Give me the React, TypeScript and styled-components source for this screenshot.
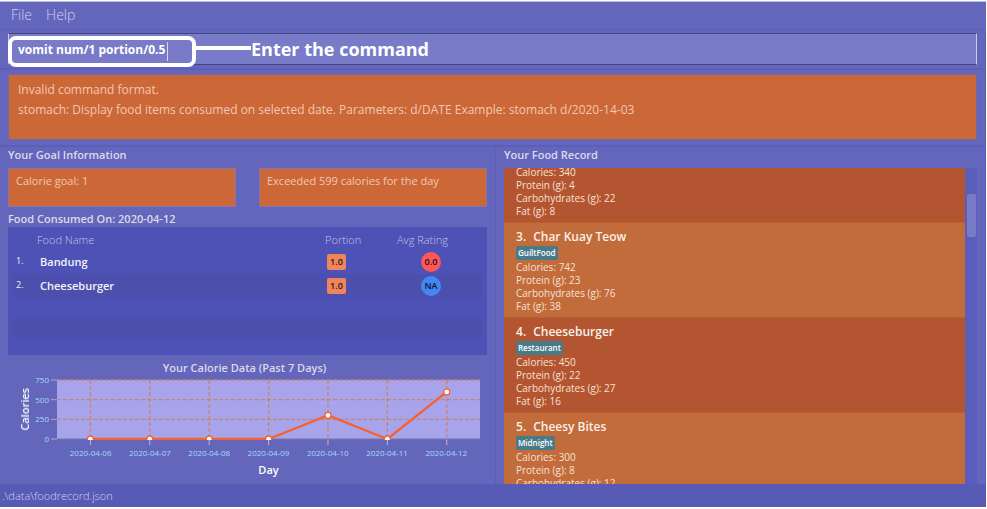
import React, { useLayoutEffect, useRef, useState } from "react";
import styled, { createGlobalStyle } from "styled-components";

const GlobalStyle = createGlobalStyle`
  * { box-sizing: border-box; }
  body {
    margin: 0;
    background: #ffffff;
    font-family: "Open Sans", "Noto Sans", sans-serif;
  }
`;

const Window = styled.div`
  display: flex;
  flex-direction: column;
  height: 100vh;
  border: solid #ffffff;
  border-width: 1px 1px 2px 0;
  background: #6466bc;
  color: #e0def0;
`;

const MenuBar = styled.nav`
  display: flex;
  gap: 14px;
  padding: 3px 11px 4px;
  border-top: 1px solid #b9bae0;
`;

const MenuButton = styled.button`
  padding: 0;
  border: 0;
  background: none;
  color: #d0d0ec;
  font: 300 14px/20px "Open Sans", sans-serif;
`;

const CommandPane = styled.div`
  position: relative;
  padding: 3px 8px;
  border: solid #5c5fba;
  border-width: 1px 1px 1px 0;
`;

const CommandInput = styled.input`
  display: block;
  width: 100%;
  height: 32px;
  padding: 0 9px;
  border: solid #42447f;
  border-width: 1px;
  border-left-color: #c9c9ec;
  border-right-color: #c9c9ec;
  border-radius: 0;
  outline: 0;
  background: #797bc8;
  color: #ffffff;
  font: 700 12px/20px "Open Sans", sans-serif;
`;

const Callout = styled.div`
  position: absolute;
  left: 8px;
  top: 6px;
  display: flex;
  align-items: center;
  pointer-events: none;
`;

const CalloutFrame = styled.div`
  display: flex;
  align-items: center;
  justify-content: flex-end;
  width: 188px;
  height: 31px;
  padding-right: 24px;
  border: 4px solid #ffffff;
  border-radius: 8px;
`;

const Caret = styled.div`
  width: 1px;
  height: 19px;
  background: #d8d8f2;
`;

const CalloutLine = styled.div`
  width: 55px;
  height: 4px;
  margin-bottom: 7px;
  background: #ffffff;
`;

const CalloutText = styled.span`
  margin-bottom: 6px;
  color: #ffffff;
  font: 700 18px/24px "Open Sans", sans-serif;
`;

const ResultPane = styled.div`
  padding: 4px 8px 5px;
  border: solid #5c5fba;
  border-width: 1px 1px 1px 0;
`;

const Result = styled.output`
  display: block;
  height: 66px;
  padding: 5px 9px;
  border: 1px solid #6f68ac;
  background: #cc6838;
  color: #f1c7b2;
  font-size: 12px;
  line-height: 20px;
`;

const Main = styled.main`
  display: grid;
  grid-template-columns: 496fr 490fr;
  flex: 1;
  min-height: 0;
`;

const Pane = styled.section`
  display: flex;
  flex-direction: column;
  min-height: 0;
  padding: 0 8px;
  border: solid #5a5db9;
  border-width: 1px 1px 0 0;
`;

const Heading = styled.h2<{ $tall?: boolean }>`
  margin: 0;
  padding-bottom: ${(p) => (p.$tall ? 5 : 0)}px;
  color: #dcdaea;
  font-weight: 600;
  font-size: 11px;
  line-height: 16px;
`;

const GoalRow = styled.div`
  display: grid;
  grid-template-columns: 1fr 1fr;
  gap: 23px;
  padding-bottom: 4px;
`;

const GoalBox = styled.div`
  height: 39px;
  padding: 2px 7px;
  border: 1px solid #8a72a8;
  background: #cc6838;
  color: #f1c7b2;
  font-size: 11px;
  line-height: 20px;
`;

const FoodPanel = styled.div`
  flex: 1;
  min-height: 0;
  padding: 1px 5px 0 4px;
  background: #4e51b5;
  overflow: hidden;
`;

const FoodTable = styled.table`
  width: 100%;
  border-collapse: collapse;
  table-layout: fixed;
`;

const Th = styled.th<{ $width?: number }>`
  width: ${(p) => (p.$width ? p.$width + "px" : "auto")};
  height: 22px;
  padding: 2px 0 0;
  text-align: left;
  color: #c4c3e4;
  font-weight: 300;
  font-size: 11px;
  line-height: 16px;
`;

const FoodRow = styled.tr`
  height: 24px;
  &:nth-child(even) { background: #4c50ac; }
`;

const Td = styled.td<{ $inset?: number }>`
  padding: 0 0 1px ${(p) => p.$inset ?? 0}px;
  color: #f4f3fb;
  font-weight: 600;
  font-size: 11px;
  line-height: 16px;
`;

const IndexCell = styled(Td)`
  padding-bottom: 3px;
  font-weight: 400;
  font-size: 9px;
`;

const Portion = styled.span`
  display: block;
  width: 19px;
  border-radius: 2px;
  background: #f0845b;
  color: #1d1a1a;
  text-align: center;
  font-size: 9px;
  line-height: 16px;
`;

const Rating = styled.span<{ $color: string }>`
  display: block;
  width: 20px;
  border-radius: 50%;
  background: ${(p) => p.$color};
  color: #14121c;
  text-align: center;
  font-size: 9px;
  line-height: 20px;
`;

const EmptyStripe = styled.div`
  height: 20px;
  margin-top: 20px;
  background: #4c50ac;
`;

const Chart = styled.figure`
  display: grid;
  grid-template-columns: 36px 12px 1fr;
  margin: 0;
  padding: 3px 7px 4px 1px;
`;

const ChartTitle = styled.figcaption`
  grid-column: 1 / -1;
  padding-bottom: 2px;
  text-align: center;
  color: #dcdaea;
  font-weight: 600;
  font-size: 11px;
  line-height: 20px;
`;

const YAxis = styled.div`
  display: flex;
  align-items: center;
  justify-content: space-between;
  height: 59px;
  padding-left: 8px;
`;

const YLabel = styled.span`
  writing-mode: vertical-rl;
  transform: rotate(180deg);
  color: #ffffff;
  font-weight: 600;
  font-size: 11px;
  line-height: 16px;
`;

const Ticks = styled.div`
  display: flex;
  flex-direction: column;
  justify-content: space-between;
  height: 71px;
  margin-right: -4px;
  text-align: right;
  color: #a2dcf4;
  font-size: 8px;
  line-height: 12px;
`;

const Plot = styled.svg`
  grid-column: 3;
  display: block;
  width: 100%;
  height: 59px;
  overflow: visible;
`;

const Days = styled.div`
  grid-column: 3;
  display: flex;
  padding: 8px 4px 1px;
  color: #a2dcf4;
  font-size: 8px;
  line-height: 12px;
  text-align: center;
`;

const Day = styled.span`
  flex: 1;
`;

const XLabel = styled.div`
  grid-column: 3;
  text-align: center;
  color: #ffffff;
  font-weight: 600;
  font-size: 11px;
  line-height: 20px;
`;

const RecordArea = styled.div`
  display: flex;
  flex: 1;
  min-height: 0;
`;

const RecordList = styled.ol`
  flex: 1;
  margin: 0;
  padding: 0;
  list-style: none;
  overflow-y: auto;
  scrollbar-width: none;
`;

const RecordItem = styled.li`
  padding: 5px 12px 4px;
  border-top: 1px solid #b9602f;
  background: #c26b3b;
  color: #f8e0d4;
  &:nth-child(odd) { background: #b35530; }
`;

const RecordName = styled.h3`
  display: flex;
  gap: 7px;
  margin: 0;
  color: #fbf0ea;
  font-weight: 600;
  font-size: 12px;
  line-height: 18px;
`;

const Tag = styled.span`
  display: block;
  width: fit-content;
  margin-bottom: 1px;
  padding: 0 2px;
  border-radius: 2px;
  background: #487a88;
  color: #ffffff;
  font-weight: 600;
  font-size: 8px;
  line-height: 14px;
`;

const Fact = styled.div`
  font-size: 10px;
  line-height: 13px;
`;

const ScrollTrack = styled.div`
  width: 12px;
  padding: 26px 1px 0 2px;
  background: #5a5db9;
`;

const ScrollThumb = styled.div`
  height: 43px;
  border-radius: 2px;
  background: #797bc8;
`;

const StatusBar = styled.footer`
  padding: 2px 2px 1px;
  background: #575bb6;
  color: #d0cfea;
  font-weight: 300;
  font-size: 11px;
  line-height: 20px;
`;

const foods = [
  { name: "Bandung", portion: "1.0", rating: "0.0", color: "#ff5757" },
  { name: "Cheeseburger", portion: "1.0", rating: "NA", color: "#4287f5" },
];

const records = [
  { calories: 340, protein: 4, carbs: 22, fat: 8 },
  { index: 3, name: "Char Kuay Teow", tag: "GuiltFood", calories: 742, protein: 23, carbs: 76, fat: 38 },
  { index: 4, name: "Cheeseburger", tag: "Restaurant", calories: 450, protein: 22, carbs: 27, fat: 16 },
  { index: 5, name: "Cheesy Bites", tag: "Midnight", calories: 300, protein: 8, carbs: 12 },
];

const calorieData = [
  { day: "2020-04-06", value: 0 },
  { day: "2020-04-07", value: 0 },
  { day: "2020-04-08", value: 0 },
  { day: "2020-04-09", value: 0 },
  { day: "2020-04-10", value: 300 },
  { day: "2020-04-11", value: 0 },
  { day: "2020-04-12", value: 599 },
];

const yTicks = [750, 500, 250, 0];
const plotHeight = 59;
const xAt = (i: number) => `${7.9 + i * 14.04}%`;
const yAt = (value: number) => plotHeight - (value / 750) * plotHeight;

function CaloriePlot() {
  return (
    <Plot role="img" aria-label="Calories per day">
      <defs>
        <clipPath id="plot-area">
          <rect x="0" y="-6" width="100%" height={plotHeight + 7} />
        </clipPath>
      </defs>
      <rect width="100%" height={plotHeight} fill="#a8a4ec" />
      {yTicks.map((t) => (
        <g key={t}>
          {t > 0 && (
            <line x1="0" x2="100%" y1={yAt(t)} y2={yAt(t)} stroke="#c9836f" strokeWidth="1.3" strokeDasharray="4 2" />
          )}
          <line x1="-6" x2="0" y1={yAt(t)} y2={yAt(t)} stroke="#a9aacb" />
        </g>
      ))}
      {calorieData.map((d, i) => (
        <g key={d.day}>
          <line x1={xAt(i)} x2={xAt(i)} y1="0" y2={plotHeight} stroke="#c9836f" strokeWidth="1.3" strokeDasharray="4 2" />
          <line x1={xAt(i)} x2={xAt(i)} y1={plotHeight} y2={plotHeight + 6} stroke="#b9bad6" />
        </g>
      ))}
      <line x1="0" x2="100%" y1={plotHeight} y2={plotHeight} stroke="#77779f" />
      <g clipPath="url(#plot-area)">
        {calorieData.slice(1).map((d, i) => (
          <line
            key={d.day}
            x1={xAt(i)}
            y1={yAt(calorieData[i].value)}
            x2={xAt(i + 1)}
            y2={yAt(d.value)}
            stroke="#f5622f"
            strokeWidth="2.4"
            strokeLinecap="round"
          />
        ))}
        {calorieData.map((d, i) => (
          <circle key={d.day} cx={xAt(i)} cy={yAt(d.value)} r="3" fill="#ffffff" stroke="#f5622f" strokeWidth="1.3" />
        ))}
      </g>
    </Plot>
  );
}

export default function App() {
  const [command, setCommand] = useState("vomit num/1 portion/0.5");
  const listRef = useRef<HTMLOListElement>(null);

  useLayoutEffect(() => {
    if (listRef.current) listRef.current.scrollTop = 8;
  }, []);

  return (
    <>
      <GlobalStyle />
      <Window>
        <MenuBar>
          <MenuButton type="button">File</MenuButton>
          <MenuButton type="button">Help</MenuButton>
        </MenuBar>
        <CommandPane>
          <CommandInput
            aria-label="Enter the command"
            spellCheck={false}
            value={command}
            onChange={(e) => setCommand(e.target.value)}
          />
          <Callout>
            <CalloutFrame>
              <Caret />
            </CalloutFrame>
            <CalloutLine />
            <CalloutText>Enter the command</CalloutText>
          </Callout>
        </CommandPane>
        <ResultPane>
          <Result>
            Invalid command format.
            <br />
            stomach: Display food items consumed on selected date. Parameters: d/DATE Example: stomach d/2020-14-03
          </Result>
        </ResultPane>
        <Main>
          <Pane>
            <Heading $tall>Your Goal Information</Heading>
            <GoalRow>
              <GoalBox>Calorie goal: 1</GoalBox>
              <GoalBox>Exceeded 599 calories for the day</GoalBox>
            </GoalRow>
            <Heading>Food Consumed On: 2020-04-12</Heading>
            <FoodPanel>
              <FoodTable>
                <thead>
                  <tr>
                    <Th $width={25} aria-label="Number" />
                    <Th>Food Name</Th>
                    <Th $width={72}>Portion</Th>
                    <Th $width={85}>Avg Rating</Th>
                  </tr>
                </thead>
                <tbody>
                  {foods.map((f, i) => (
                    <FoodRow key={f.name}>
                      <IndexCell $inset={4}>{i + 1}.</IndexCell>
                      <Td $inset={3}>{f.name}</Td>
                      <Td $inset={2}>
                        <Portion>{f.portion}</Portion>
                      </Td>
                      <Td $inset={24}>
                        <Rating $color={f.color}>{f.rating}</Rating>
                      </Td>
                    </FoodRow>
                  ))}
                </tbody>
              </FoodTable>
              <EmptyStripe />
            </FoodPanel>
            <Chart>
              <ChartTitle>Your Calorie Data (Past 7 Days)</ChartTitle>
              <YAxis>
                <YLabel>Calories</YLabel>
                <Ticks>
                  {yTicks.map((t) => (
                    <span key={t}>{t}</span>
                  ))}
                </Ticks>
              </YAxis>
              <CaloriePlot />
              <Days>
                {calorieData.map((d) => (
                  <Day key={d.day}>{d.day}</Day>
                ))}
              </Days>
              <XLabel>Day</XLabel>
            </Chart>
          </Pane>
          <Pane>
            <Heading $tall>Your Food Record</Heading>
            <RecordArea>
              <RecordList ref={listRef}>
                {records.map((r) => (
                  <RecordItem key={r.calories}>
                    {r.name && (
                      <RecordName>
                        <span>{r.index}.</span>
                        {r.name}
                      </RecordName>
                    )}
                    {r.tag && <Tag>{r.tag}</Tag>}
                    <Fact>Calories: {r.calories}</Fact>
                    <Fact>Protein (g): {r.protein}</Fact>
                    <Fact>Carbohydrates (g): {r.carbs}</Fact>
                    {r.fat !== undefined && <Fact>Fat (g): {r.fat}</Fact>}
                  </RecordItem>
                ))}
              </RecordList>
              <ScrollTrack>
                <ScrollThumb />
              </ScrollTrack>
            </RecordArea>
          </Pane>
        </Main>
        <StatusBar>.\data\foodrecord.json</StatusBar>
      </Window>
    </>
  );
}
